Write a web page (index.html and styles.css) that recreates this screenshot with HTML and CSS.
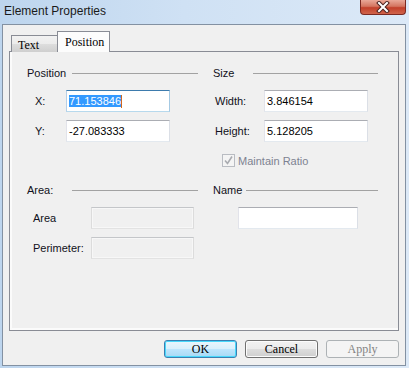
FILE: index.html
```html
<!DOCTYPE html>
<html>
<head>
    <title>Element Properties</title>
    <meta charset="UTF-8">
    <link rel="stylesheet" href="styles.css">
</head>
<body>
    <div class="window">
        <div class="title-bar">
            <span class="title">Element Properties</span>
            <div class="close-button">
                <svg width="14" height="12" viewBox="0 0 14 12">
                    <path d="M3 2 L11 10 M11 2 L3 10" stroke="#4b2220" stroke-width="4" stroke-linecap="square"/>
                    <path d="M3 2 L11 10 M11 2 L3 10" stroke="#fff" stroke-width="2" stroke-linecap="square"/>
                </svg>
            </div>
        </div>

        <div class="client">
            <div class="tabs">
                <div class="tab tab-text">Text</div>
                <div class="tab tab-position active">Position</div>
            </div>

            <div class="tab-panel">
                <div class="band">
                    <div class="group group-position">
                        <div class="group-header"><span class="group-title">Position</span><span class="rule"></span></div>
                        <div class="field-row">
                            <span class="field-label">X:</span>
                            <div class="field focused"><span class="selected">71.153846</span><span class="caret"></span></div>
                        </div>
                        <div class="field-row">
                            <span class="field-label">Y:</span>
                            <div class="field">-27.083333</div>
                        </div>
                    </div>

                    <div class="group group-size">
                        <div class="group-header"><span class="group-title">Size</span><span class="rule"></span></div>
                        <div class="field-row">
                            <span class="field-label">Width:</span>
                            <div class="field">3.846154</div>
                        </div>
                        <div class="field-row">
                            <span class="field-label">Height:</span>
                            <div class="field">5.128205</div>
                        </div>
                        <label class="checkbox-label disabled">
                            <span class="checkbox">
                                <svg width="11" height="11" viewBox="0 0 11 11">
                                    <path d="M2 5.5 L4.5 8.5 L9 1.5" stroke="#a9abb0" stroke-width="1.6" fill="none"/>
                                </svg>
                            </span>
                            Maintain Ratio
                        </label>
                    </div>
                </div>

                <div class="band band-lower">
                    <div class="group group-area">
                        <div class="group-header"><span class="group-title">Area:</span><span class="rule"></span></div>
                        <div class="field-row">
                            <span class="field-label">Area</span>
                            <div class="field disabled"></div>
                        </div>
                        <div class="field-row">
                            <span class="field-label">Perimeter:</span>
                            <div class="field disabled"></div>
                        </div>
                    </div>

                    <div class="group group-name">
                        <div class="group-header"><span class="group-title">Name</span><span class="rule"></span></div>
                        <div class="field-row">
                            <div class="field wide"></div>
                        </div>
                    </div>
                </div>
            </div>

            <div class="button-row">
                <div class="button default">OK</div>
                <div class="button">Cancel</div>
                <div class="button disabled">Apply</div>
            </div>
        </div>
    </div>
</body>
</html>
```

FILE: styles.css
```css
body {
    margin: 0;
    font-family: "Liberation Sans", Arial, sans-serif;
    font-size: 11px;
    color: #111;
}
.window {
    width: 409px;
    height: 368px;
    box-sizing: border-box;
    padding: 0 3px 2px 2px;
    display: flex;
    flex-direction: column;
    background: linear-gradient(to right, #bdd5ee, #cfe1f4 45%, #dce9f7);
}
.title-bar {
    height: 24px;
    display: flex;
    align-items: flex-start;
    flex-shrink: 0;
}
.title {
    font-size: 12px;
    color: #1a1a1a;
    padding: 4px 0 0 2px;
}
.close-button {
    margin-left: auto;
    width: 46px;
    height: 15px;
    box-sizing: border-box;
    border: 1px solid #7b2a22;
    border-top: none;
    border-radius: 0 0 4px 4px;
    background: linear-gradient(to bottom, #e9a898, #d47560 45%, #c2402a 55%, #d0644b);
    display: flex;
    align-items: center;
    justify-content: center;
}
.client {
    flex: 1;
    border: 1px solid #8391a2;
    background: #f0f0f0;
    padding: 6px 6px 0 6px;
    display: flex;
    flex-direction: column;
}
.tabs {
    display: flex;
    align-items: flex-end;
    padding-left: 2px;
    margin-bottom: -1px;
    position: relative;
    z-index: 1;
    font-family: "Liberation Serif", "Times New Roman", serif;
    font-size: 12px;
    color: #000;
}
.tab {
    box-sizing: border-box;
    border: 1px solid #898c95;
    border-bottom: none;
}
.tab-text {
    width: 47px;
    height: 17px;
    padding: 2px 0 0 6px;
    background: linear-gradient(to bottom, #f2f2f2, #ebebeb 50%, #dddddd 51%, #cfcfcf);
}
.tab-position {
    width: 53px;
    height: 21px;
    margin-left: -1px;
    padding: 3px 0 0 7px;
    background: #fcfcfc;
}
.tab-panel {
    height: 280px;
    box-sizing: border-box;
    border: 1px solid #898c95;
    background: #f0f0f0;
    box-shadow: inset 2px -2px 0 #fbfbfb;
    padding: 14px 20px 0 17px;
}
.band {
    display: grid;
    grid-template-columns: 171px 165px;
    column-gap: 15px;
}
.band-lower {
    margin-top: 16px;
}
.group-header {
    display: flex;
    align-items: center;
    height: 14px;
}
.group-title {
    flex-shrink: 0;
    color: #101020;
}
.group-position .group-title, .group-area .group-title {
    width: 45px;
}
.group-size .group-title {
    width: 40px;
}
.group-name .group-title {
    width: 33px;
}
.rule {
    flex: 1;
    height: 1px;
    background: #a2a2a2;
}
.field-row {
    display: flex;
    align-items: center;
    margin-top: 8px;
}
.group-header + .field-row {
    margin-top: 10px;
}
.field-label {
    flex-shrink: 0;
    color: #101020;
}
.group-position .field-row {
    padding-left: 8px;
}
.group-position .field-label {
    width: 31px;
}
.group-size .field-row {
    padding-left: 2px;
}
.group-size .field-label {
    width: 49px;
}
.group-area .field-row {
    padding-left: 6px;
}
.group-area .field-label {
    width: 58px;
}
.group-name .field-row {
    padding-left: 25px;
}
.field {
    width: 104px;
    height: 22px;
    box-sizing: border-box;
    border: 1px solid;
    border-color: #abadb3 #dbdfe6 #e3e9ef #e2e3ea;
    background: #fff;
    padding: 0 0 0 2px;
    display: flex;
    align-items: center;
    font-size: 11px;
    color: #000;
}
.field.focused {
    border-color: #3d7bad #a4c9e3 #b7d9ed #b5cfe7;
}
.field.disabled {
    width: 103px;
    background: #f0f0f0;
    border-color: #c4c6c9 #dcdcdc #e2e2e2 #dcdcdc;
    box-shadow: inset 0 0 0 1px #f7f7f7;
}
.field.wide {
    width: 120px;
}
.selected {
    background: #3399ff;
    color: #fff;
    line-height: 12px;
}
.caret {
    width: 1px;
    height: 13px;
    background: #d2691e;
}
.checkbox-label {
    display: flex;
    align-items: center;
    gap: 3px;
    margin-top: 12px;
    padding-left: 9px;
    height: 13px;
}
.checkbox-label.disabled {
    color: #7d8291;
}
.checkbox {
    width: 13px;
    height: 13px;
    box-sizing: border-box;
    border: 1px solid #b9bcc2;
    background: #f4f4f4;
    display: flex;
    align-items: center;
    justify-content: center;
}
.button-row {
    display: flex;
    justify-content: flex-end;
    gap: 8px;
    margin-top: 9px;
}
.button {
    width: 73px;
    height: 18px;
    box-sizing: border-box;
    border: 1px solid #707070;
    border-radius: 3px;
    background: linear-gradient(to bottom, #f2f2f2, #ebebeb 50%, #dddddd 51%, #cfcfcf);
    box-shadow: inset 0 0 0 1px #fcfcfc;
    font-family: "Liberation Serif", "Times New Roman", serif;
    font-size: 12px;
    color: #000;
    display: flex;
    align-items: center;
    justify-content: center;
}
.button.default {
    border-color: #3c7fb1;
    background: linear-gradient(to bottom, #eaf6fd, #d9f0fc 50%, #bee6fd 51%, #a7d9f5);
    box-shadow: inset 0 0 0 1px #48d8fb;
}
.button.disabled {
    border-color: #adb2b5;
    background: #f4f4f4;
    box-shadow: none;
    color: #838383;
}
```
